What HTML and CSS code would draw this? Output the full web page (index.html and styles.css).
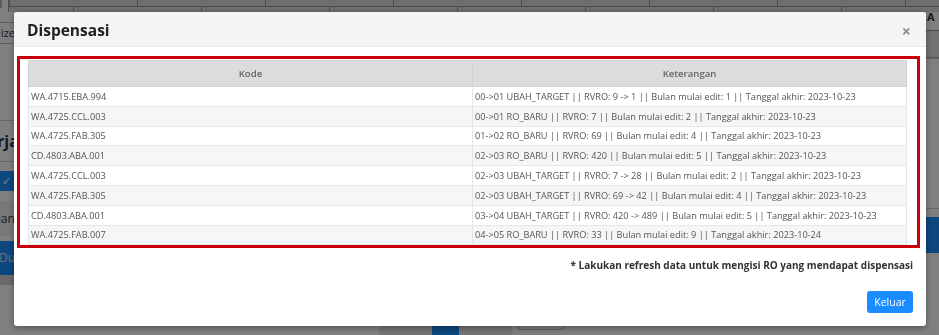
FILE: index.html
```html
<!DOCTYPE html>
<html lang="id">
<head>
    <meta charset="UTF-8">
    <meta name="viewport" content="width=device-width, initial-scale=1.0">
    <title>Dispensasi</title>
    <link rel="stylesheet" href="styles.css">
</head>
<body>
    <div class="page">
        <div class="page-top">
            <div class="select-box"></div>
            <div class="grid-first"></div>
            <div class="grid-head">
                <div class="grid-cell"></div>
                <div class="grid-cell"></div>
                <div class="grid-cell"></div>
                <div class="grid-cell"></div>
                <div class="grid-cell"></div>
                <div class="grid-cell"></div>
                <div class="grid-cell"></div>
                <div class="grid-cell"></div>
            </div>
        </div>
        <div class="page-main">
            <div class="side-left">
                <div class="btn-normalize">Normalize</div>
                <div class="title-kerja">Kerja</div>
                <div class="check-btn">&#10003;</div>
                <div class="tab-box">Dan O</div>
                <div class="blue-bar">Dul</div>
            </div>
            <div class="side-right">
                <div class="right-head">A</div>
                <div class="right-row"></div>
                <div class="right-gap"></div>
                <div class="right-label">ar</div>
                <div class="blue-bar"></div>
            </div>
        </div>
        <div class="page-bottom">
            <div class="pager">
                <span class="pg"></span>
                <span class="pg active"></span>
                <span class="pg"></span>
            </div>
            <span class="pg-outline"></span>
        </div>
    </div>

    <div class="backdrop"></div>

    <div class="modal">
        <div class="modal-header">
            <h4 class="modal-title">Dispensasi</h4>
            <span class="modal-close">&times;</span>
        </div>
        <div class="modal-body">
            <div class="highlight">
                <table class="disp-table">
                    <thead>
                        <tr>
                            <th class="col-kode">Kode</th>
                            <th>Keterangan</th>
                        </tr>
                    </thead>
                    <tbody>
                        <tr><td>WA.4715.EBA.994</td><td>00-&gt;01 UBAH_TARGET || RVRO: 9 -&gt; 1 || Bulan mulai edit: 1 || Tanggal akhir: 2023-10-23</td></tr>
                        <tr><td>WA.4725.CCL.003</td><td>00-&gt;01 RO_BARU || RVRO: 7 || Bulan mulai edit: 2 || Tanggal akhir: 2023-10-23</td></tr>
                        <tr><td>WA.4725.FAB.305</td><td>01-&gt;02 RO_BARU || RVRO: 69 || Bulan mulai edit: 4 || Tanggal akhir: 2023-10-23</td></tr>
                        <tr><td>CD.4803.ABA.001</td><td>02-&gt;03 RO_BARU || RVRO: 420 || Bulan mulai edit: 5 || Tanggal akhir: 2023-10-23</td></tr>
                        <tr><td>WA.4725.CCL.003</td><td>02-&gt;03 UBAH_TARGET || RVRO: 7 -&gt; 28 || Bulan mulai edit: 2 || Tanggal akhir: 2023-10-23</td></tr>
                        <tr><td>WA.4725.FAB.305</td><td>02-&gt;03 UBAH_TARGET || RVRO: 69 -&gt; 42 || Bulan mulai edit: 4 || Tanggal akhir: 2023-10-23</td></tr>
                        <tr><td>CD.4803.ABA.001</td><td>03-&gt;04 UBAH_TARGET || RVRO: 420 -&gt; 489 || Bulan mulai edit: 5 || Tanggal akhir: 2023-10-23</td></tr>
                        <tr><td>WA.4725.FAB.007</td><td>04-&gt;05 RO_BARU || RVRO: 33 || Bulan mulai edit: 9 || Tanggal akhir: 2023-10-24</td></tr>
                    </tbody>
                </table>
            </div>
            <p class="note">* Lakukan refresh data untuk mengisi RO yang mendapat dispensasi</p>
        </div>
        <div class="modal-footer">
            <button class="btn-keluar">Keluar</button>
        </div>
    </div>
</body>
</html>
```

FILE: styles.css
```css
body {
    margin: 0;
    background-color: #fff;
    font-family: "Open Sans", Arial, sans-serif;
    overflow: hidden;
}

/* page behind the modal */
.page {
    height: 335px;
    display: flex;
    flex-direction: column;
    color: #333;
    font-size: 11px;
}
.page-top {
    display: flex;
    height: 12px;
}
.select-box {
    width: 74px;
    height: 7px;
    border: 1px solid #bbb;
    border-top: none;
    border-radius: 0 0 4px 4px;
}
.grid-first {
    width: 43px;
    margin-left: 6px;
    border-left: 1px solid #999;
    background-color: #dcdcdc;
}
.grid-head {
    flex: 1;
    display: flex;
    background-color: #dcdcdc;
}
.grid-cell {
    width: 127px;
    flex: none;
    border-left: 1px solid #999;
    border-bottom: 1px solid #999;
    height: 6px;
}
.grid-cell::after {
    content: "";
    display: block;
    height: 10px;
    margin: 7px 0 0 63px;
    border-left: 1px solid #999;
}
.page-main {
    flex: 1;
    display: flex;
    justify-content: space-between;
}
.side-left {
    width: 40px;
    display: flex;
    flex-direction: column;
    align-items: flex-end;
}
.btn-normalize {
    margin-top: 10px;
    width: 36px;
    height: 20px;
    line-height: 20px;
    text-align: right;
    padding-right: 24px;
    border: 1px solid #bbb;
    border-left: none;
    direction: rtl;
    overflow: hidden;
    font-size: 11px;
}
.title-kerja {
    margin-top: 76px;
    width: 100%;
    height: 40px;
    line-height: 40px;
    border-top: 1px solid #ccc;
    border-bottom: 1px solid #ccc;
    font-size: 16px;
    font-weight: bold;
    text-indent: -23px;
    overflow: hidden;
}
.check-btn {
    align-self: flex-start;
    margin-top: 9px;
    width: 13px;
    height: 20px;
    line-height: 20px;
    padding-left: 2px;
    background-color: #1a8fff;
    color: #fff;
    font-size: 11px;
}
.tab-box {
    margin-top: 10px;
    width: 100%;
    height: 35px;
    line-height: 35px;
    background-color: #f0f0f0;
    font-size: 12px;
    text-indent: -8px;
    overflow: hidden;
}
.side-left .blue-bar {
    margin-top: 5px;
    width: 100%;
    height: 34px;
    line-height: 34px;
    color: #ddd;
    font-size: 12px;
    text-indent: -1px;
    border-bottom: 10px solid #d4d4d4;
}
.blue-bar {
    background-color: #1a8fff;
}
.side-right {
    width: 30px;
    display: flex;
    flex-direction: column;
}
.right-head {
    height: 30px;
    line-height: 34px;
    margin-top: -12px;
    border-bottom: 1px solid #999;
    font-weight: bold;
    font-size: 11px;
    text-indent: 18px;
}
.right-row {
    height: 26px;
    background-color: #e2e2e2;
    border-bottom: 1px solid #aaa;
}
.right-gap {
    height: 133px;
    border-top: 1px solid #ccc;
}
.right-label {
    height: 16px;
    line-height: 16px;
    text-indent: 4px;
    border-bottom: 1px solid #ccc;
}
.side-right .blue-bar {
    margin-top: 8px;
    height: 36px;
}
.page-bottom {
    height: 10px;
    display: flex;
    justify-content: center;
    gap: 6px;
    padding-left: 4px;
}
.pager {
    display: flex;
    height: 10px;
}
.pg {
    width: 53px;
    background-color: #e8e8e8;
}
.pg.active {
    width: 27px;
    background-color: #1a8fff;
}
.pg-outline {
    width: 44px;
    height: 4px;
    border: 1px solid #bbb;
    border-top: none;
    border-radius: 0 0 4px 4px;
}

/* modal */
.backdrop {
    position: fixed;
    inset: 0;
    background-color: rgba(0, 0, 0, 0.5);
}
.modal {
    position: fixed;
    left: 14px;
    top: 12px;
    width: 912px;
    height: 314px;
    background-color: #fff;
    border-radius: 3px;
    box-shadow: 0 2px 6px rgba(0, 0, 0, 0.35);
    display: flex;
    flex-direction: column;
}
.modal-header {
    height: 34px;
    display: flex;
    align-items: center;
    justify-content: space-between;
    padding: 0 15px 0 13px;
    background-color: #f4f4f4;
    border-bottom: 1px solid #eaeaea;
    border-radius: 3px 3px 0 0;
}
.modal-title {
    margin: 0;
    font-size: 15.5px;
    font-weight: 700;
    color: #222;
    padding-top: 2px;
}
.modal-close {
    font-size: 16px;
    font-weight: bold;
    color: #8f8f8f;
    padding-top: 3px;
}
.modal-body {
    padding: 9px 13px 0 3px;
}
.highlight {
    width: 888px;
    height: 185px;
    border: 3px solid #c8000a;
    padding: 1px 1px 0 8px;
}
.disp-table {
    width: 879px;
    border-collapse: collapse;
    font-size: 9.2px;
    color: #555;
}
.disp-table th {
    height: 23px;
    background-color: #dcdcdc;
    font-weight: 600;
    font-size: 9.6px;
    color: #666;
    border: 1px solid #d2d2d2;
}
.disp-table th.col-kode {
    width: 441px;
}
.disp-table td {
    height: 18.8px;
    padding: 0 2px;
    border: 1px solid #e6e6e6;
    white-space: nowrap;
}
.disp-table tbody tr:nth-child(even) {
    background-color: #f6f6f6;
}
.note {
    margin: 10px 0 0;
    text-align: right;
    font-size: 10px;
    font-weight: bold;
    color: #333;
}
.modal-footer {
    display: flex;
    justify-content: flex-end;
    padding: 19px 13px 0;
}
.btn-keluar {
    width: 46px;
    height: 22px;
    padding: 0;
    border: none;
    border-radius: 3px;
    background-color: #1a8cff;
    color: #fff;
    font-family: "Open Sans", Arial, sans-serif;
    font-size: 10.5px;
    cursor: pointer;
}
```
